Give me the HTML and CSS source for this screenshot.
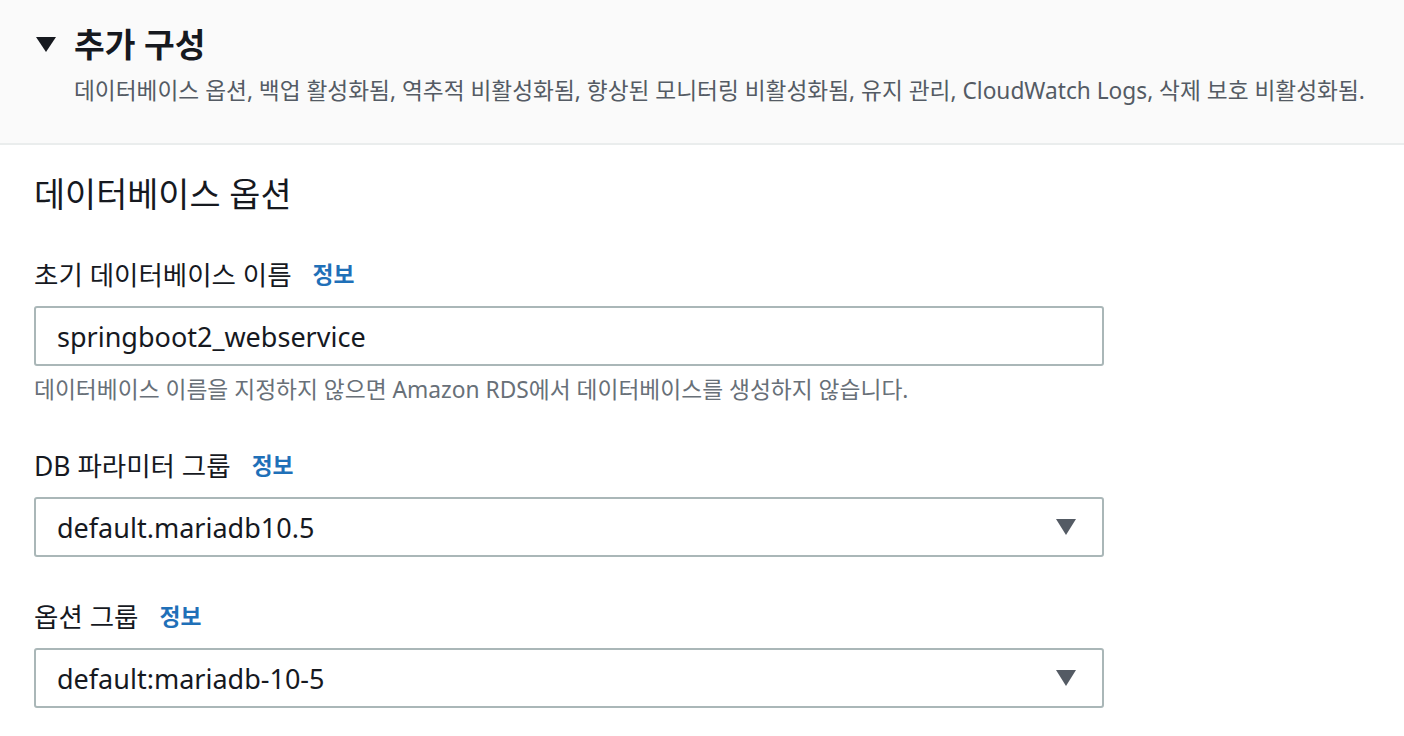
FILE: index.html
```html
<!DOCTYPE html>
<html lang="ko">
<head>
<meta charset="utf-8">
<link rel="stylesheet" href="styles.css">
</head>
<body>
<div class="page">
  <div class="expander">
    <div class="exp-title">
      <span class="caret-down"></span>
      <h2>추가 구성</h2>
    </div>
    <p class="exp-desc">데이터베이스 옵션, 백업 활성화됨, 역추적 비활성화됨, 향상된 모니터링 비활성화됨, 유지 관리, CloudWatch Logs, 삭제 보호 비활성화됨.</p>
  </div>
  <div class="body">
    <h3 class="section-title">데이터베이스 옵션</h3>

    <div class="field">
      <div class="label">초기 데이터베이스 이름<a class="info">정보</a></div>
      <div class="control">springboot2_webservice</div>
      <div class="hint">데이터베이스 이름을 지정하지 않으면 Amazon RDS에서 데이터베이스를 생성하지 않습니다.</div>
    </div>

    <div class="field">
      <div class="label">DB 파라미터 그룹<a class="info">정보</a></div>
      <div class="control select">default.mariadb10.5<span class="sel-caret"></span></div>
    </div>

    <div class="field">
      <div class="label">옵션 그룹<a class="info">정보</a></div>
      <div class="control select">default:mariadb-10-5<span class="sel-caret"></span></div>
    </div>
  </div>
</div>
</body>
</html>
```

FILE: styles.css
```css
* { box-sizing: border-box; }
html, body { margin: 0; padding: 0; background: #ffffff; }
body {
  font-family: "Noto Sans", "Noto Sans CJK KR", sans-serif;
  color: #16191f;
  width: 1404px;
  height: 736px;
  overflow: hidden;
}
.expander {
  background: #fafafa;
  border-bottom: 2px solid #eaeded;
  height: 145px;
  padding: 22px 0 0 36px;
}
.exp-title {
  display: flex;
  align-items: center;
  gap: 18px;
  height: 44px;
}
.caret-down {
  width: 0; height: 0;
  border-left: 10px solid transparent;
  border-right: 10px solid transparent;
  border-top: 15px solid #16191f;
}
.exp-title h2 {
  margin: 0;
  font-size: 33.4px;
  font-weight: 700;
  line-height: 44px;
}
.exp-desc {
  margin: 10px 0 0 38px;
  font-size: 22.7px;
  line-height: 30px;
  color: #545b64;
  white-space: nowrap;
}
.body { padding: 27px 0 0 34px; }
.section-title {
  margin: 0;
  font-size: 33.8px;
  font-weight: 400;
  line-height: 44px;
}
.field { width: 1070px; margin-top: 42px; }
.field + .field { margin-top: 44px; }
.field:last-child { margin-top: 43px; }
.label {
  font-size: 26.5px;
  line-height: 34px;
  display: flex;
  align-items: center;
}
.info {
  color: #1f70b8;
  font-weight: 700;
  font-size: 22.8px;
  margin-left: 21px;
}
.control {
  margin-top: 14px;
  height: 60px;
  border: 2px solid #aab7b8;
  border-radius: 3px;
  padding: 0 21px;
  display: flex;
  align-items: center;
  font-size: 27px;
}
.select { justify-content: space-between; }
.sel-caret {
  width: 0; height: 0;
  border-left: 10px solid transparent;
  border-right: 10px solid transparent;
  border-top: 16px solid #545b64;
  margin-right: 5px;
}
.hint {
  margin-top: 9px;
  font-size: 22.75px;
  line-height: 30px;
  color: #687078;
  white-space: nowrap;
}
```
